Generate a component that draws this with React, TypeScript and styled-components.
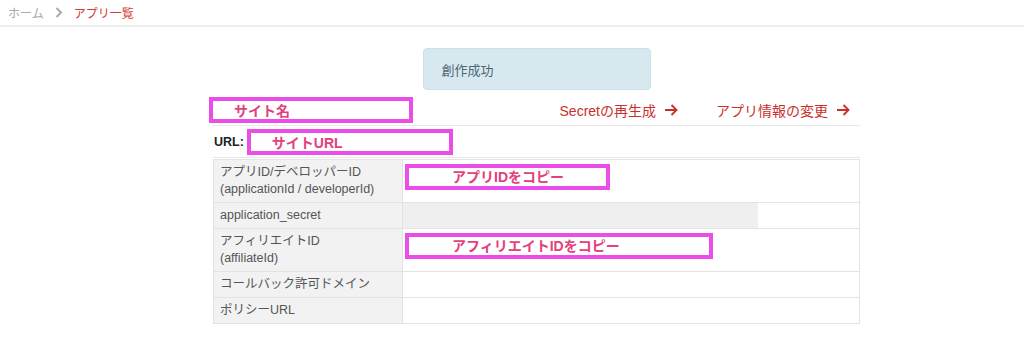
import React from 'react'
import styled, { createGlobalStyle } from 'styled-components'

const GlobalStyle = createGlobalStyle`
  body {
    margin: 0;
    background: #fff;
    font-family: 'Liberation Sans', 'Noto Sans CJK JP', sans-serif;
    color: #555;
  }
`

const Breadcrumb = styled.nav`
  height: 25px;
  display: flex;
  align-items: center;
  gap: 11px;
  padding-left: 8px;
  border-bottom: 2px solid #eeeeee;
  font-size: 12px;
`

const Crumb = styled.span<{ $active?: boolean }>`
  color: ${(p) => (p.$active ? '#d23a32' : '#aaa')};
`

const Chevron = styled.span`
  display: flex;
  align-items: center;
`

const Main = styled.main`
  width: 647px;
  margin-left: 213px;
  padding-top: 21px;
`

const Alert = styled.div`
  width: 228px;
  height: 42px;
  margin: 0 auto;
  padding: 0 10px 0 18px;
  box-sizing: border-box;
  display: flex;
  align-items: center;
  background: #d7e9ef;
  border: 1px solid #c9e2ea;
  border-radius: 4px;
  color: #4c6673;
  font-size: 13px;
`

const HeaderRow = styled.div`
  display: flex;
  align-items: center;
  justify-content: space-between;
  height: 30px;
  margin-top: 5px;
  border-bottom: 1px solid #e8e8e8;
`

const Actions = styled.div`
  display: flex;
  gap: 38px;
  padding-right: 10px;
`

const ActionLink = styled.a`
  color: #c9302c;
  font-size: 14px;
  text-decoration: none;
  display: flex;
  align-items: center;
  gap: 8px;
`

const Marker = styled.span<{ $width: number; $indent: number }>`
  display: flex;
  align-items: center;
  box-sizing: border-box;
  width: ${(p) => p.$width}px;
  height: 26px;
  padding-left: ${(p) => p.$indent}px;
  border: 4px solid #ea4ee6;
  background: #fff;
  color: #e3407c;
  font-weight: bold;
  font-size: 14px;
`

const NameMarker = styled(Marker)`
  margin-left: -4px;
`

const UrlRow = styled.div`
  display: flex;
  align-items: center;
  gap: 3px;
  height: 31px;
  padding-left: 1px;
  border-bottom: 1px solid #e8e8e8;
`

const UrlLabel = styled.span`
  font-weight: bold;
  font-size: 12.5px;
  color: #222;
`

const Table = styled.table`
  width: 100%;
  margin-top: 1px;
  border-collapse: collapse;
  table-layout: fixed;
  font-size: 12.5px;
`

const HeadCell = styled.th`
  width: 176px;
  text-align: left;
  font-weight: normal;
  background: #f2f2f2;
  color: #555;
  border: 1px solid #e3e3e3;
  padding: 4px 6px;
  line-height: 17px;
  vertical-align: middle;
  white-space: nowrap;
`

const ValueCell = styled.td`
  border: 1px solid #e3e3e3;
  padding: 0;
  vertical-align: top;
  line-height: 17px;
`

const ValueInner = styled.div`
  padding: 4px 2px 0;
`

const SecretBar = styled.div`
  width: 355px;
  height: 25px;
  background: #efefef;
`

const ArrowIcon = () => (
  <svg width="14" height="14" viewBox="0 0 14 14" fill="none" stroke="#c9302c" strokeWidth="1.9">
    <path d="M1 7h11.5M7.5 2l5 5-5 5" />
  </svg>
)

const ChevronIcon = () => (
  <svg width="8" height="11" viewBox="0 0 8 11" fill="none" stroke="#aaa" strokeWidth="2">
    <path d="M1.5 1l4.5 4.5L1.5 10" />
  </svg>
)

const App = () => {
  return (
    <>
      <GlobalStyle />
      <Breadcrumb>
        <Crumb>ホーム</Crumb>
        <Chevron>
          <ChevronIcon />
        </Chevron>
        <Crumb $active>アプリ一覧</Crumb>
      </Breadcrumb>
      <Main>
        <Alert>創作成功</Alert>
        <HeaderRow>
          <NameMarker $width={204} $indent={21}>サイト名</NameMarker>
          <Actions>
            <ActionLink href="#">
              Secretの再生成 <ArrowIcon />
            </ActionLink>
            <ActionLink href="#">
              アプリ情報の変更 <ArrowIcon />
            </ActionLink>
          </Actions>
        </HeaderRow>
        <UrlRow>
          <UrlLabel>URL:</UrlLabel>
          <Marker $width={206} $indent={21}>サイトURL</Marker>
        </UrlRow>
        <Table>
          <tbody>
            <tr>
              <HeadCell>
                アプリID/デベロッパーID
                <br />
                (applicationId / developerId)
              </HeadCell>
              <ValueCell>
                <ValueInner>
                  <Marker $width={205} $indent={43}>アプリIDをコピー</Marker>
                </ValueInner>
              </ValueCell>
            </tr>
            <tr>
              <HeadCell>application_secret</HeadCell>
              <ValueCell>
                <SecretBar />
              </ValueCell>
            </tr>
            <tr>
              <HeadCell>
                アフィリエイトID
                <br />
                (affiliateId)
              </HeadCell>
              <ValueCell>
                <ValueInner>
                  <Marker $width={308} $indent={43}>アフィリエイトIDをコピー</Marker>
                </ValueInner>
              </ValueCell>
            </tr>
            <tr>
              <HeadCell>コールバック許可ドメイン</HeadCell>
              <ValueCell />
            </tr>
            <tr>
              <HeadCell>ポリシーURL</HeadCell>
              <ValueCell />
            </tr>
          </tbody>
        </Table>
      </Main>
    </>
  )
}

export default App
